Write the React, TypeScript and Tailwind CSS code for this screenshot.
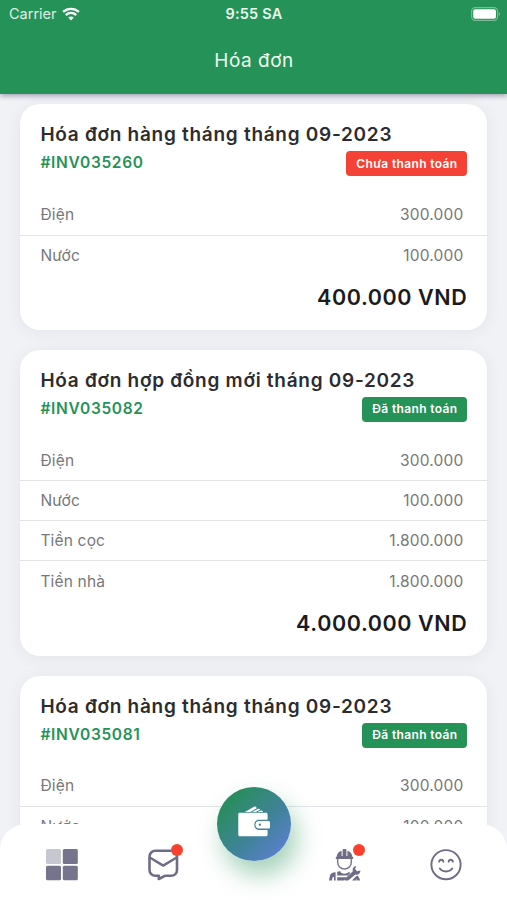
import { clsx } from 'clsx'

interface InvoiceLine {
  label: string
  amount: string
}

interface Invoice {
  code: string
  title: string
  paid: boolean
  lines: InvoiceLine[]
  total: string
}

const INVOICES: Invoice[] = [
  {
    code: '#INV035260',
    title: 'Hóa đơn hàng tháng tháng 09-2023',
    paid: false,
    lines: [
      { label: 'Điện', amount: '300.000' },
      { label: 'Nước', amount: '100.000' },
    ],
    total: '400.000 VND',
  },
  {
    code: '#INV035082',
    title: 'Hóa đơn hợp đồng mới tháng 09-2023',
    paid: true,
    lines: [
      { label: 'Điện', amount: '300.000' },
      { label: 'Nước', amount: '100.000' },
      { label: 'Tiền cọc', amount: '1.800.000' },
      { label: 'Tiền nhà', amount: '1.800.000' },
    ],
    total: '4.000.000 VND',
  },
  {
    code: '#INV035081',
    title: 'Hóa đơn hàng tháng tháng 09-2023',
    paid: true,
    lines: [
      { label: 'Điện', amount: '300.000' },
      { label: 'Nước', amount: '100.000' },
    ],
    total: '400.000 VND',
  },
]

function WifiIcon() {
  return (
    <svg width="18" height="14.2" viewBox="0 0 19 15" fill="none" stroke="#fff" strokeWidth="2.5">
      <path d="M1.2 5.2C5.9.9 13.1.9 17.8 5.2" />
      <path d="M4 8.5C7.2 5.6 11.8 5.6 15 8.5" />
      <path d="M6.6 11.2Q9.5 8.7 12.4 11.2L9.5 14.2Z" fill="#fff" stroke="none" />
    </svg>
  )
}

function BatteryIcon() {
  return (
    <svg width="30" height="14" viewBox="0 0 30 14" fill="none">
      <rect x="0.6" y="0.6" width="26" height="12.8" rx="3.6" stroke="#7abd97" strokeWidth="1.1" />
      <rect x="2.2" y="2.2" width="22.8" height="9.6" rx="2" fill="#fff" />
      <path d="M27.8 5v4c1.6-.6 1.6-3.4 0-4Z" fill="#7abd97" />
    </svg>
  )
}

function GridIcon() {
  return (
    <svg width="32" height="32" viewBox="0 0 32 32" fill="#76748c">
      <rect x="0" y="0" width="15" height="15" rx="1.5" fill="#c7c7d1" />
      <rect x="16.8" y="0" width="15" height="15" rx="1.5" />
      <rect x="0" y="16.8" width="15" height="14.5" rx="1.5" />
      <rect x="16.8" y="16.8" width="15" height="14.5" rx="1.5" />
    </svg>
  )
}

function MessageIcon() {
  return (
    <svg width="32" height="32" viewBox="0 0 32 32" fill="none" stroke="#6e6c86" strokeWidth="2.6" strokeLinejoin="round" strokeLinecap="round">
      <path d="M8.5 1.8H24c3.5 0 6 2.5 6 6v13c0 3.5-2.5 6-6 6h-6.2l-6 3.2v-3.2H8.5c-3.5 0-6-2.5-6-6v-13c0-3.5 2.5-6 6-6Z" />
      <path d="M3.2 8.8 16.2 16.6 29.2 8.8" strokeWidth="2.4" />
    </svg>
  )
}

function WorkerIcon() {
  return (
    <svg width="32" height="32" viewBox="0 0 32 32" fill="#6e6c86">
      {/* helmet */}
      <path d="M7.6 7.8C8 4.5 10 2.4 12.6 1.7v5.2h1V.9c0-.5.3-.8.8-.8h2.2c.5 0 .8.3.8.8v6h1V1.7c2.6.7 4.6 2.8 5 6.1.7.2.9.7.9 1.1 0 .6-.4 1-1 1H7.700c-.6 0-1-.4-1-1 0-.5.3-.9.9-1.1Z" />
      {/* face */}
      <path d="M8.7 10v3.3c0 3.900 3.100 6.700 6.800 6.700s6.800-2.800 6.800-6.700V10" fill="none" stroke="#7d7b92" strokeWidth="1.5" />
      {/* overalls */}
      <path d="M6.6 23.2v8.300H5V28H3.700l-.8 3.500H0l.8-4.200c.5-2.700 2.600-4 5.800-4.100ZM8.200 23l2.800-.9c.4 1.600 2.200 2.600 4.500 2.600 1.800 0 3.300-.6 4.100-1.700l1.800.8-2.400 2.800H8.200V23ZM8.200 28.200h9.600l-3 3.300H8.200Z" />
      {/* wrench */}
      <path d="m15.900 29.700 8-7.500c-.8-2.300.6-4.900 3.300-5.200l-1.100 3.100 1.900 2.100 3.400-.8c.1 2.800-2.500 5-5 4.100l-7.300 6h-3c-.9-.3-.9-1.100-.2-1.800Z" />
      <path d="m26.300 28 1.700-1.500c1.700.9 2.600 2.600 3 5h-2.700l-.7-2.500v2.500H23Z" />
    </svg>
  )
}

function SmileIcon() {
  return (
    <svg width="32" height="32" viewBox="0 0 32 32" fill="none" stroke="#6e6c86" strokeWidth="1.9" strokeLinecap="round">
      <circle cx="16" cy="15.7" r="14.6" />
      <path d="M9.2 12.7c.4-2.7 3.7-2.7 4.1 0M18.7 12.7c.4-2.7 3.7-2.7 4.1 0" />
      <path d="M9.8 19.5c2.9 3.9 9.5 3.9 12.4 0" />
    </svg>
  )
}

function WalletIcon() {
  return (
    <svg width="33" height="32" viewBox="0 0 34 32" fill="#fff">
      <path d="m7 6.6 9.6-5.2c.9-.5 1.7-.4 2.2.4l.6 1-6.6 3.8Z" />
      <path d="m14.5 6.6 6.3-3.1c.7-.4 1.4-.2 1.7.4l.2.5-4.5 2.2ZM20 6.6l3.6-1.400c1-.4 1.8.2 2 1.400Z" />
      <path d="M1.8 7.6h26.8c1.2 0 1.9.7 1.9 1.9v5.1h-9c-6.2 0-6.2 10.600 0 10.600h9v4.600c0 1.200-.7 1.900-1.900 1.900H1.800c-1 0-1.500-.7-1.500-1.900V9.500c0-1.200.5-1.900 1.500-1.900Z" />
      <path d="M21.5 16H31c1.3 0 2 .6 2 1.7v4.4c0 1.1-.7 1.7-2 1.7h-9.5c-4.7 0-4.7-7.800 0-7.800Z" />
      <circle cx="22.5" cy="19.9" r="1.2" fill="#4385a0" />
    </svg>
  )
}

function StatusBar() {
  return (
    <div className="grid h-7 grid-cols-3 items-center pl-[9px] pr-[6px] text-[14.5px] leading-none">
      <div className="flex items-center gap-[5px]">
        <span className="opacity-85">Carrier</span>
        <WifiIcon />
      </div>
      <span className="pr-[2px] text-center font-semibold tracking-[0.2px] text-[#eaf8ef]">9:55 SA</span>
      <div className="flex justify-end">
        <BatteryIcon />
      </div>
    </div>
  )
}

function InvoiceCard({ invoice }: { invoice: Invoice }) {
  return (
    <article className="rounded-[20px] bg-white pt-4 shadow-[0_2px_16px_rgba(50,60,70,0.07)]">
      <h2 className="h-[31px] whitespace-nowrap px-5 text-[19px] font-semibold leading-[30px] tracking-[0.72px] text-[#2c2c30]">
        {invoice.title}
      </h2>
      <div className="flex h-[44px] items-start justify-between px-5">
        <span className="text-[15.5px] font-semibold leading-6 tracking-[0.66px] text-[#259257]">
          {invoice.code}
        </span>
        <span
          className={clsx(
            'flex h-[25px] items-center whitespace-nowrap rounded-[4px] px-[10px] text-[12px] font-semibold tracking-[0.35px] text-white',
            invoice.paid ? 'bg-[#259257]' : 'bg-[#f44336]'
          )}
        >
          {invoice.paid ? 'Đã thanh toán' : 'Chưa thanh toán'}
        </span>
      </div>

      <ul className="divide-y divide-[#e4e4e8]">
        {invoice.lines.map((line) => (
          <li
            key={line.label}
            className="flex h-[40.2px] items-center justify-between pl-5 pr-6 text-[15.5px] tracking-[0.18px] text-[#77777a]"
          >
            <span>{line.label}</span>
            <span>{line.amount}</span>
          </li>
        ))}
      </ul>

      <p className="h-[54px] px-5 pt-[5.5px] text-right text-[21.5px] font-semibold leading-[32px] tracking-[0.6px] text-[#1b1b1d]">
        {invoice.total}
      </p>
    </article>
  )
}

function Dot() {
  return <span className="absolute -right-[4px] -top-[5px] size-3 rounded-full bg-[#f9402f]" />
}

function BottomNav() {
  return (
    <nav className="absolute inset-x-0 bottom-0 flex h-[76px] items-start justify-between rounded-t-[26px] bg-white pl-[46px] pr-[45px] pt-[25px]">
      <button>
        <GridIcon />
      </button>
      <button className="relative mr-[40px]">
        <MessageIcon />
        <Dot />
      </button>
      <button className="absolute left-[217px] top-[-37px] flex size-[74px] items-center justify-center rounded-full bg-linear-to-br from-[#2b8c62] from-20% via-[#40829a] via-58% to-[#5b7fd0] to-90% pb-[7px] shadow-[6px_14px_24px_rgba(37,146,87,0.42)]">
        <WalletIcon />
      </button>
      <button className="relative ml-[40px]">
        <WorkerIcon />
        <Dot />
      </button>
      <button>
        <SmileIcon />
      </button>
    </nav>
  )
}

export default function App() {
  return (
    <div className="relative flex h-[900px] w-full flex-col overflow-hidden bg-[#f0f2f6] font-['Inter','Noto_Sans',sans-serif]">
      <header className="z-10 h-[94px] shrink-0 bg-[#259257] text-white shadow-[0_2px_5px_rgba(50,40,80,0.4)]">
        <StatusBar />
        <h1 className="pl-px pt-[17.5px] text-center text-[19px] leading-[30px] tracking-[0.5px] text-[#eefaf2]">Hóa đơn</h1>
      </header>

      <main className="flex min-h-0 flex-1 flex-col gap-5 overflow-hidden pl-[20.4px] pr-[19.6px] pt-[10.4px]">
        {INVOICES.map((invoice) => (
          <InvoiceCard key={invoice.code} invoice={invoice} />
        ))}
      </main>

      <BottomNav />
    </div>
  )
}
